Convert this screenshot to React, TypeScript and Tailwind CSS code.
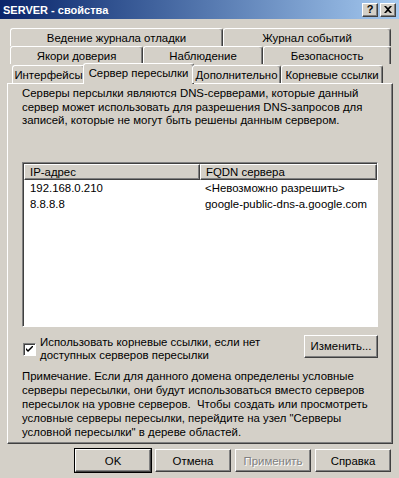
import { ReactNode } from "react";

const raised =
  "border border-t-white border-l-white border-r-[#404040] border-b-[#404040] shadow-[inset_-1px_-1px_#808080]";
const sunken =
  "border border-t-[#808080] border-l-[#808080] border-r-white border-b-white shadow-[inset_1px_1px_#404040]";

function Tab({
  label,
  width,
  selected = false,
}: {
  label: string;
  width: number;
  selected?: boolean;
}) {
  return (
    <div
      className={
        "flex shrink-0 items-center justify-center rounded-t-[3px] border-t border-l border-r border-t-white border-l-white border-r-[#404040] shadow-[inset_-1px_0_#808080] bg-[#d4d0c8] whitespace-nowrap " +
        (selected ? "h-[21px] -mx-[2px] -mb-px pb-[2px]" : "h-[18px]")
      }
      style={{ width }}
    >
      {label}
    </div>
  );
}

function Button({
  children,
  width,
  isDefault = false,
  disabled = false,
}: {
  children: ReactNode;
  width: number;
  isDefault?: boolean;
  disabled?: boolean;
}) {
  return (
    <div
      className={
        "flex h-[23px] shrink-0 items-center justify-center font-normal " +
        (isDefault ? "outline outline-1 outline-black " : "") +
        raised +
        (disabled ? " text-[#808080] [text-shadow:1px_1px_0_#fff]" : "")
      }
      style={{ width }}
    >
      {children}
    </div>
  );
}

export default function App() {
  return (
    <div
      className="w-[399px] h-[478px] overflow-hidden bg-[#d4d0c8] text-[11.4px] leading-[14px] text-black"
      style={{ fontFamily: '"Liberation Sans", Arial, sans-serif' }}
    >
      {/* title bar */}
      <div className="flex h-[19px] items-center bg-gradient-to-r from-[#0a246a] to-[#a6caf0] pl-[3px] pr-[3px]">
        <span className="text-[11px] font-bold text-white">
          SERVER - свойства
        </span>
        <div className="ml-auto flex gap-[2px]">
          <div
            className={
              "flex h-[14px] w-[16px] items-center justify-center bg-[#d4d0c8] text-[11px] font-bold leading-none " +
              raised
            }
          >
            ?
          </div>
          <div
            className={
              "flex h-[14px] w-[16px] items-center justify-center bg-[#d4d0c8] " +
              raised
            }
          >
            <svg width="8" height="7" viewBox="0 0 8 7">
              <path
                d="M0 0h2l2 2 2-2h2L5 3.5 8 7H6L4 5 2 7H0l3-3.5z"
                fill="black"
              />
            </svg>
          </div>
        </div>
      </div>

      <div className="px-[7px] pt-[9px]">
        {/* tab rows */}
        <div className="ml-[3px] flex">
          <Tab label="Ведение журнала отладки" width={213} />
          <Tab label="Журнал событий" width={168} />
        </div>
        <div className="ml-[3px] flex">
          <Tab label="Якори доверия" width={133} />
          <Tab label="Наблюдение" width={120} />
          <Tab label="Безопасность" width={128} />
        </div>
        <div className="relative z-10 ml-[5px] flex h-[19px] items-end">
          <Tab label="Интерфейсы" width={73} />
          <Tab label="Сервер пересылки" width={111} selected />
          <Tab label="Дополнительно" width={89} />
          <Tab label="Корневые ссылки" width={102} />
        </div>

        {/* panel */}
        <div className={"flex h-[361px] w-[386px] flex-col px-[14px] pt-[3px] " + raised}>
          <p className="shrink-0 whitespace-nowrap leading-[13.5px]">
            Серверы персылки являются DNS-серверами, которые данный
            <br />
            сервер может использовать для разрешения DNS-запросов для
            <br />
            записей, которые не могут быть решены данным сервером.
          </p>

          <div className={"mt-[34px] h-[165px] w-[356px] shrink-0 bg-white " + sunken}>
            <div className="flex h-[17px] pl-px pt-px">
              <div className={"flex w-[176px] items-center bg-[#d4d0c8] pl-[5px] " + raised}>
                IP-адрес
              </div>
              <div className={"flex w-[177px] items-center bg-[#d4d0c8] pl-[5px] " + raised}>
                FQDN сервера
              </div>
            </div>
            <div className="flex h-[16px] items-center pl-[7px]">
              <span className="w-[175px]">192.168.0.210</span>
              <span>&lt;Невозможно разрешить&gt;</span>
            </div>
            <div className="flex h-[16px] items-center pl-[7px]">
              <span className="w-[175px]">8.8.8.8</span>
              <span>google-public-dns-a.google.com</span>
            </div>
          </div>

          <div className="mt-[8px] flex shrink-0 items-start">
            <div
              className={
                "mt-[8px] ml-px flex h-[13px] w-[13px] shrink-0 items-center justify-center bg-white " +
                sunken
              }
            >
              <svg width="7" height="7" viewBox="0 0 7 7">
                <path d="M0 2l2 2 5-5v2L2 6 0 4z" fill="black" />
              </svg>
            </div>
            <div className="ml-[4px] mt-px whitespace-nowrap leading-[13px]">
              Использовать корневые ссылки, если нет
              <br />
              доступных серверов пересылки
            </div>
            <div className="ml-auto">
              <Button width={74}>Изменить...</Button>
            </div>
          </div>

          <p className="mt-[7px] shrink-0 whitespace-nowrap">
            Примечание. Если для данного домена определены условные
            <br />
            серверы пересылки, они будут использоваться вместо серверов
            <br />
            пересылок на уровне серверов.&nbsp; Чтобы создать или просмотреть
            <br />
            условные серверы пересылки, перейдите на узел "Серверы
            <br />
            условной пересылки" в дереве областей.
          </p>
        </div>

        {/* dialog buttons */}
        <div className="mt-[5px] flex gap-[4px] pl-[68px]">
          <Button width={76} isDefault>
            OK
          </Button>
          <Button width={76}>Отмена</Button>
          <Button width={76} disabled>
            Применить
          </Button>
          <Button width={76}>Справка</Button>
        </div>
      </div>
    </div>
  );
}
